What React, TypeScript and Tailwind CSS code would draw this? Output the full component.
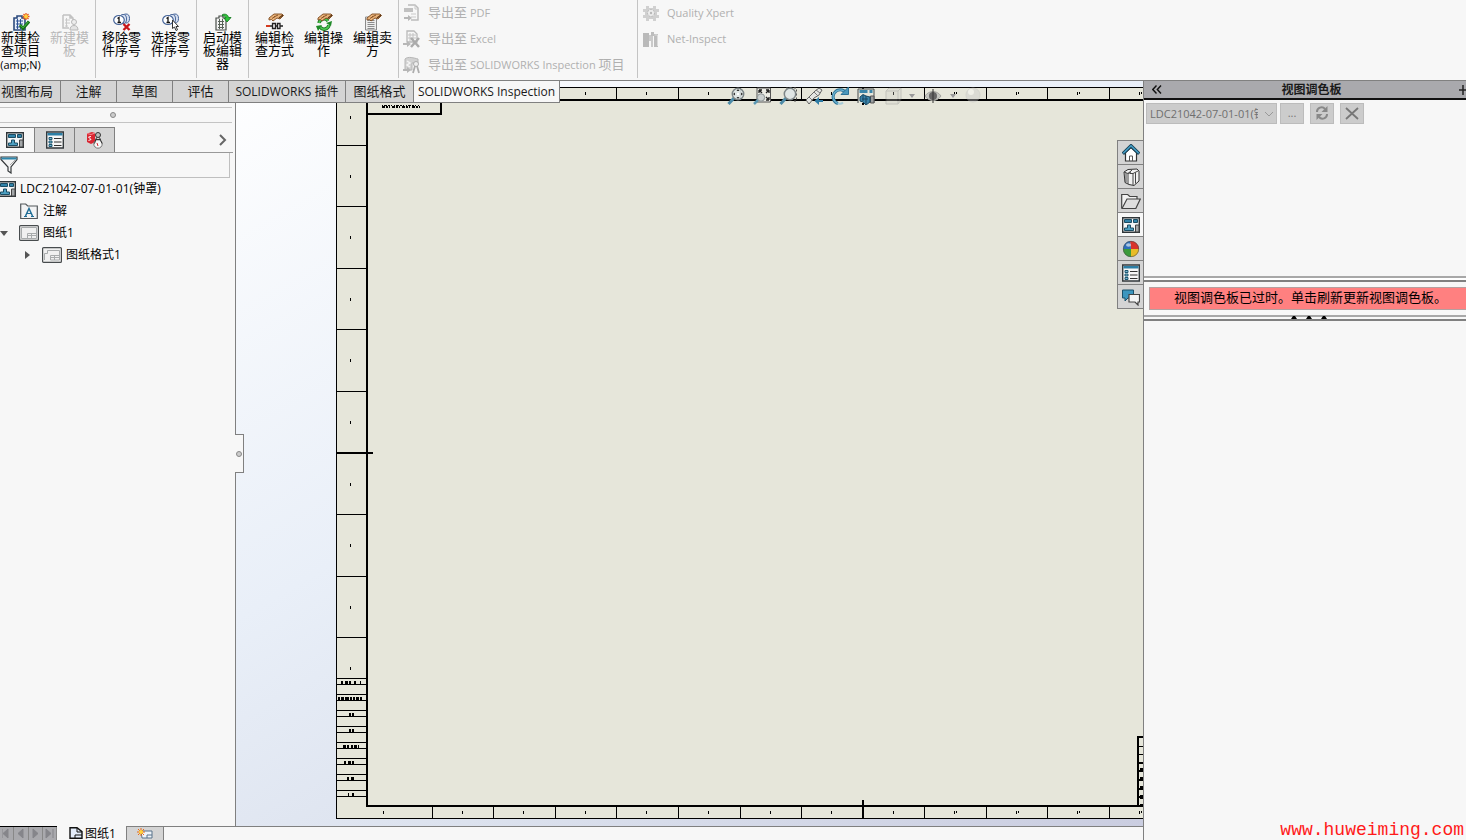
import React, { useState } from 'react';

type IconProps = { className?: string };

const Svg: React.FC<{ size?: number; className?: string; children: React.ReactNode }> = ({ size = 18, className = '', children }) => (
  <svg width={size} height={size} viewBox="0 0 18 18" fill="none" className={`shrink-0 ${className}`} aria-hidden="true">
    {children}
  </svg>
);

const Hand = () => (
  <>
    <path d="M3 5 8 1h8l1.500 1.500L14 6l-3-1-4 3-1.500-1.500L3 7z" fill="#e8b27a" />
    <path d="M3 5 8 1h8l1.500 1.500L14 6l-3-1-4 3-1.500-1.500L3 7zM8 4l4-2M6 5.500l3-2" stroke="#7d4a1e" strokeWidth=".9" />
    <path d="m13 5 4-3" stroke="#5f3816" strokeWidth="1.500" />
  </>
);

const Spark = () => (
  <>
    <path d="M14 0v7M10.500 3.500h7M11.500 1l5 5M16.500 1l-5 5" stroke="#e8591b" strokeWidth="1.300" />
    <circle cx="14" cy="3.500" r="1.900" fill="#ffd23c" />
  </>
);

const NewProjectIcon = () => (
  <Svg>
    <path d="M2 5h3V3h5v2h3v12H2z" fill="#e8eef8" stroke="#2d4b7d" strokeWidth="1.600" />
    <path d="M4 8h7M4 11h7M4 14h7M5.500 6v10M8.500 6v10" stroke="#2d5396" />
    <path d="m8 12 3 3.500 6-7" stroke="#147014" strokeWidth="3" />
    <path d="m8.500 12.300 2.500 2.500 5.500-6" stroke="#4cc34c" />
    <Spark />
  </Svg>
);

const NewTemplateIcon = () => (
  <Svg>
    <path d="M2 2h7l3 3v4M2 2v13h6M9 2v3h3" stroke="#c2c2c2" strokeWidth="1.500" />
    <path d="M4 7h5M4 10h5M4 13h3M5.500 5v9" stroke="#c8c8c8" />
    <circle cx="13" cy="9" r="2.500" fill="#eee" stroke="#b8b8b8" />
    <path d="M9 17c0-3 1.500-4.500 4-4.500s4 1.500 4 4.500z" fill="#e4e4e4" stroke="#b8b8b8" />
  </Svg>
);

const Balloons = () => (
  <>
    <ellipse cx="13" cy="5.500" rx="3.500" ry="4.500" fill="#d4def0" stroke="#446398" />
    <ellipse cx="10" cy="6" rx="3.500" ry="4.500" fill="#e4ebf7" stroke="#446398" />
    <ellipse cx="6" cy="7" rx="5.300" ry="4.500" fill="#fff" stroke="#446398" strokeWidth="1.200" />
    <path d="m4.500 5.500 1.500-1V10M4.500 9.500h3.500" stroke="#111" strokeWidth="1.300" />
  </>
);

const RemoveBalloonIcon = () => (
  <Svg>
    <Balloons />
    <path d="m10.500 11 6 6m0-6-6 6" stroke="#c8171b" strokeWidth="2.400" />
  </Svg>
);

const SelectBalloonIcon = () => (
  <Svg>
    <Balloons />
    <path d="M10.500 7v8.500l2-1.500 1.500 3.500 1.500-.700-1.500-3.300h2.500z" fill="#fff" stroke="#333" />
  </Svg>
);

const TemplateEditorIcon = () => (
  <Svg>
    <path d="M2 5h3V3h4v2h3v12H2z" fill="#f3f3f3" stroke="#4a4f4a" strokeWidth="1.200" />
    <path d="M4 8.500h6M4 11.500h6M4 14.500h6M5.500 6v10M8.500 6v10" stroke="#596259" />
    <path d="M8.500 1.500C12 .500 14 2 14.500 4.500H17L13 9 10 5h2c-.500-1.500-1.500-2.500-3.500-2z" fill="#2ec43a" stroke="#147a20" strokeWidth=".9" />
  </Svg>
);

const EditMethodIcon = () => (
  <Svg>
    <Hand />
    <path d="M1 13h16" stroke="#222" strokeWidth="1.500" />
    <path d="M0 12h4v2H0z" fill="#d33a20" />
    <path d="M6.500 10.500h3v5h-3zM11.500 10.500h2.500v5h-2.500z" fill="#eee" stroke="#222" strokeWidth="1.300" />
  </Svg>
);

const EditOperationIcon = () => (
  <Svg>
    <path d="M4 10a5 5 0 0 1 9-2M14 12a5 5 0 0 1-9 2" stroke="#1c7a22" strokeWidth="3.500" />
    <path d="M4 10a5 5 0 0 1 9-2M14 12a5 5 0 0 1-9 2" stroke="#4cc752" strokeWidth="1.500" />
    <path d="m11 10 6-2-1 5zM7 12l-6 1 2 5z" fill="#1f8a28" />
    <Hand />
  </Svg>
);

const EditVendorIcon = () => (
  <Svg>
    <path d="M1.500 4h11v13h-11z" fill="#eee" stroke="#8b8b8b" />
    <path d="M3.500 7.500h7M3.500 9.500h7M3.500 11.500h7M3.500 13.500h7M3.500 15.500h7" stroke="#8c8c8c" />
    <Hand />
  </Svg>
);

const ExportPdfIcon = () => (
  <Svg>
    <path d="M5 1h7l3 3v12H8" stroke="#bcbcbc" strokeWidth="1.500" />
    <path d="M1 4h9v4H1z" fill="#c1c1c1" />
    <path d="M8 10h5M8 13h5M12 1v4h3" stroke="#c9c9c9" />
    <path d="M1 13h4v-2l4 3-4 3v-2H1z" fill="#b7b7b7" />
  </Svg>
);

const ExportExcelIcon = () => (
  <Svg>
    <path d="M4 1h7l3 3v8H4z" stroke="#b9b9b9" strokeWidth="1.300" />
    <path d="M5 5h8M5 8h8M7 3v9M10 3v9" stroke="#c3c3c3" />
    <path d="m8 8 8 9m0-9-8 9" stroke="#ababab" strokeWidth="2.500" />
    <path d="M0 13h4v-2l4 3-4 3v-2H0z" fill="#b7b7b7" />
  </Svg>
);

const ExportProjectIcon = () => (
  <Svg>
    <path d="M2 3c3-3 9-1 13 0v4H9v7H2z" fill="#d2d2d2" stroke="#b6b6b6" />
    <path d="m4 5 3 2-3 2 3 2" stroke="#f4f4f4" strokeWidth="1.500" />
    <circle cx="13" cy="8" r="2.500" fill="#eee" stroke="#adadad" />
    <path d="m12 10-2 7m4-7 2 7" stroke="#adadad" strokeWidth="1.800" />
    <path d="M0 13h4v-2l4 3-4 3v-2H0z" fill="#b7b7b7" />
  </Svg>
);

const QualityIcon = () => (
  <Svg>
    <path d="M4 2h3v2h4V2h3v3h3v3h-2v3h2v3h-3v3h-3v-2H7v2H4v-3H1v-3h2V8H1V5h3z" fill="#d0d0d0" />
    <circle cx="9" cy="9" r="3.500" fill="#ececec" stroke="#b8b8b8" strokeDasharray="2 1" />
    <circle cx="9" cy="9" r="1.200" fill="#b8b8b8" />
  </Svg>
);

const NetInspectIcon = () => (
  <Svg>
    <path d="M1 3h6v14H1z" fill="#bababa" />
    <path d="M7 5h4v12H9v-6H7z" fill="#cacaca" />
    <path d="M9 2h3v4H9zM12 4h4v13h-4z" fill="#bdbdbd" />
    <path d="M12.500 5h3v11" stroke="#dcdcdc" />
  </Svg>
);

const DrawingIcon: React.FC<IconProps> = ({ className }) => (
  <Svg className={className}>
    <path d="M.700 1.700h16.600v14.600H.700z" fill="#f4f6f7" stroke="#2f3538" strokeWidth="1.400" />
    <path d="M2.500 3.500h7v3h-7zM11.500 3.500h4v3h-4z" fill="#2f83aa" stroke="#1c4c63" />
    <path d="M5.500 9h3v3h3v2.500h-9V12h3z" fill="#4da0c2" stroke="#1c4c63" />
    <path d="M13.500 9h3.500v7h-3.500z" fill="#a3a7a9" stroke="#444" />
  </Svg>
);

const PropertyIcon: React.FC<IconProps> = ({ className }) => (
  <Svg className={className}>
    <path d="M.700 1h16.600v16H.700z" fill="#f7f7f7" stroke="#33393c" strokeWidth="1.400" />
    <path d="M1.500 2h15v2.500h-15z" fill="#2d7fa6" />
    <path d="M3 6.500h3v2H3zM3 10h3v2H3zM3 13.500h3v2H3z" fill="#7dbbd4" stroke="#1d5670" />
    <path d="M8 7.500h7.500M8 11h7.500M8 14.500h7.500" stroke="#333" strokeWidth="1.200" />
  </Svg>
);

const BalloonManagerIcon = () => (
  <Svg>
    <path d="m1 2.500 5-1.500 3 1v9l-4 2-4-2z" fill="#d92531" />
    <path d="m1 2.500 4 1 4-1.500" stroke="#f18a90" />
    <path d="M5 5.500 2.500 6 5 8.500l-2.500 1" stroke="#fff" />
    <circle cx="12" cy="4" r="2.500" fill="#bbb" stroke="#333" />
    <circle cx="12" cy="13" r="4.200" fill="#f7f7f7" stroke="#777" />
    <path d="m10.500 6.500-2 6m5-6 2.500 6M9.500 8.500h5" stroke="#333" />
    <path d="m11 12 1 3" stroke="#d92531" />
  </Svg>
);

const FilterIcon = () => (
  <Svg>
    <path d="M1 1h16v2.500L11 11v6l-3-2v-4L1 3.500z" fill="#f3f3f3" stroke="#34383a" strokeWidth="1.200" />
    <path d="M1.500 1.500h15v2h-15z" fill="#2d87ad" />
    <path d="m10 9 5-5" stroke="#aaa" />
  </Svg>
);

const AnnotationIcon = () => (
  <Svg>
    <path d="M.700 16.500V2h5l2 2h9.600v12.500z" fill="#f2f3f4" stroke="#53585b" strokeWidth="1.200" />
    <path d="M5.500 14 9 6.500l3.500 7.500" stroke="#1f6d96" strokeWidth="1.500" />
    <path d="M7 11.500h4M4 14.500h3M11 14.500h3" stroke="#1f6d96" />
  </Svg>
);

const SheetIcon: React.FC<{ format?: boolean }> = ({ format }) => (
  <svg width="20" height="16" viewBox="0 0 20 16" fill="none" className="shrink-0" aria-hidden="true">
    <rect x=".6" y=".6" width="18.800" height="14.800" rx="1" fill="#f0f0f0" stroke="#484c4e" strokeWidth="1.200" />
    <path d={format ? 'M2.500 13V6.500h3v-3h12V13H8.500V8.500h9M12.500 8.500V13M8.500 10.500h9' : 'M2.500 2.500h15v11h-15zM8.500 13V8.500h9M12.500 8.500V13M8.500 10.500h9'} stroke="#a8abac" />
  </svg>
);

const HomeIcon = () => (
  <Svg>
    <path d="M3.500 8.500 9 3.500l5.500 5V17h-11z" fill="#fff" stroke="#333" strokeWidth="1.200" />
    <path d="M7.500 17v-5h3v5" stroke="#555" />
    <path d="m.800 9.800 8.200-8 8.200 8" stroke="#1a4358" strokeWidth="3.400" />
    <path d="m1.300 9.300 7.700-7.500 7.700 7.500" stroke="#45a0c9" strokeWidth="1.400" />
  </Svg>
);

const LibraryIcon = () => (
  <Svg>
    <path d="m2 4 4-2.500L15 1l2 2v10l-5 4.500-5-1-4-2z" fill="#f1f1f1" stroke="#333" />
    <path d="m2 4 4 1.500L9 4M6 5.500V16m0-10.500L10 2M11 5.500V17m0-11.500L16 3M7.500 5.500l3.500 0M13.500 4.500v11M4 5v9.500" stroke="#444" />
  </Svg>
);

const FolderIcon = () => (
  <svg width="20" height="18" viewBox="0 0 20 18" fill="none" className="shrink-0" aria-hidden="true">
    <path d="M.700 16V2.500h6l2 2H16V7" fill="#f1f1f1" stroke="#444" strokeWidth="1.200" />
    <path d="M1 16.500 6 7h13.300l-4.500 9.500z" fill="#dedede" stroke="#444" strokeWidth="1.200" />
  </svg>
);

const AppearanceIcon = () => (
  <Svg>
    <path d="M9 9 8 1a8 8 0 0 1 9 8z" fill="#d9322b" />
    <path d="M9 9h8a8 8 0 0 1-8 8z" fill="#e8bc26" />
    <path d="M9 9v8a8 8 0 0 1-8-8z" fill="#3b9a3b" />
    <path d="M9 9H1a8 8 0 0 1 7-8z" fill="#2e6eba" />
    <circle cx="9" cy="9" r="7.700" stroke="#4b4b4b" strokeOpacity=".6" />
    <ellipse cx="6.500" cy="5" rx="2.500" ry="1.800" fill="#fff" fillOpacity=".6" />
  </Svg>
);

const ForumIcon = () => (
  <Svg>
    <path d="M.500 2h11v8H6l-3 3v-3H.500z" fill="#3c96bf" stroke="#1b516b" />
    <path d="M7 6.500h10.500v7.500H16v3l-3-3H7z" fill="#f5f5f5" stroke="#444" strokeWidth="1.200" />
  </Svg>
);

const Lens: React.FC<{ children?: React.ReactNode }> = ({ children }) => (
  <>
    <path d="m7 11-5.500 6" stroke="#4d8ba8" strokeWidth="3" />
    <circle cx="11" cy="7" r="5.700" fill="#dfe5e6" fillOpacity=".9" stroke="#7d8587" strokeWidth="1.500" />
    {children}
  </>
);

const DownArrow = () => (
  <svg width="6" height="4" aria-hidden="true"><path d="M0 0h6L3 4z" fill="#999" /></svg>
);

const viewTools: { name: string; width: string; icon: React.ReactNode }[] = [
  {
    name: '整屏显示全图',
    width: 'w-[26px]',
    icon: <Svg><Lens><path d="m11 2-1.500 2h3zM11 12l-1.500-2h3zM6 7l2-1.500v3zM16 7l-2-1.500v3z" fill="#333" /><path d="M10 6h2v2h-2z" fill="#fff" /></Lens></Svg>
  },
  {
    name: '局部放大',
    width: 'w-[26px]',
    icon: (
      <Svg>
        <path d="M4 1h13.500v14H4z" fill="#ecece5" stroke="#555" />
        <path d="m6 3 3 3m7-3-3 3m3 7-3-3M6 3h3M6 3v3m10-3h-3m3 0v3m0 7h-3m3 0v-3" stroke="#222" strokeWidth="1.300" />
        <path d="m6 12-5 5" stroke="#5d99b4" strokeWidth="2.500" />
        <circle cx="8" cy="10.500" r="3.700" fill="#cbd0d0" stroke="#8c9496" />
      </Svg>
    )
  },
  {
    name: '放大选取范围',
    width: 'w-[26px]',
    icon: <Svg><path d="M7 1h10.500v13H13" stroke="#555" strokeDasharray="2 2" /><Lens /></Svg>
  },
  {
    name: '上一视图',
    width: 'w-[26px]',
    icon: (
      <Svg>
        <path d="m1 13 9-9 4-3 3 2-3 5-5 3-5 6z" fill="#e5e6e2" stroke="#666" />
        <path d="m9 5 4 4M4 10l3 3M11 3l4 3" stroke="#777" />
        <path d="M18 13h-4v-3l-4.500 4 4.500 4v-3h4z" fill="#2f7ca5" />
      </Svg>
    )
  },
  {
    name: '旋转视图',
    width: 'w-[26px]',
    icon: (
      <Svg>
        <path d="M15 6A7 7 0 1 0 7 16.500" stroke="#2d7296" strokeWidth="3" />
        <path d="M15 6A7 7 0 1 0 7 16.500" stroke="#6db3d1" strokeWidth="1.200" />
        <path d="M7 16.500c2 .500 4 0 5-1" stroke="#a5cbd8" strokeWidth="2" />
        <path d="M17.500 0v7.500H10z" fill="#4c98bb" stroke="#2d7296" />
      </Svg>
    )
  },
  {
    name: '三维工程图视图',
    width: 'w-[26px]',
    icon: (
      <Svg>
        <path d="M1 16V2h16v14" stroke="#464c4f" fill="#e6e6da" />
        <path d="M2.500 3h8v3h-8zM12.500 3h3v3h-3z" fill="#3b85a8" />
        <path d="M13.500 9h3.500v7h-3.500z" fill="#9a9d9e" stroke="#555" />
        <path d="m3 10 3-2.500 3 1.500 4 1v5l-4 3-3-3-3-1z" fill="#3a84aa" stroke="#184760" />
        <path d="M6 8v6M9 9v8M5 12h6" stroke="#184760" />
      </Svg>
    )
  },
  {
    name: '显示样式',
    width: 'w-[28px]',
    icon: <Svg className="opacity-30"><path d="m2 4 3-3h12v12l-3 4H2zM2 4h12v13M14 4l3-3" fill="#d0d0c8" stroke="#777" /></Svg>
  },
  { name: '显示样式选项', width: 'w-[10px]', icon: <DownArrow /> },
  {
    name: '隐藏或显示项目',
    width: 'w-[32px]',
    icon: (
      <Svg>
        <path d="M1 9c4-6 12-6 16 0-4 6-12 6-16 0z" fill="#c4c5c0" stroke="#a5a5a0" />
        <circle cx="9" cy="9" r="4" fill="#666" />
        <path d="M9 2v14" stroke="#333" />
      </Svg>
    )
  },
  { name: '隐藏或显示选项', width: 'w-[8px]', icon: <DownArrow /> },
  {
    name: '应用布景',
    width: 'w-[32px]',
    icon: <Svg className="opacity-40"><circle cx="9" cy="8" r="7" fill="#ccc" stroke="#bbb" /><circle cx="7" cy="5" r="3" fill="#fff" /></Svg>
  }
];

const ribbonGroups = [
  [
    { text: '新建检\n查项目', hint: '(amp;N)', icon: <NewProjectIcon /> },
    { text: '新建模\n板', icon: <NewTemplateIcon />, disabled: true }
  ],
  [
    { text: '移除零\n件序号', icon: <RemoveBalloonIcon /> },
    { text: '选择零\n件序号', icon: <SelectBalloonIcon /> }
  ],
  [{ text: '启动模\n板编辑\n器', icon: <TemplateEditorIcon /> }],
  [
    { text: '编辑检\n查方式', icon: <EditMethodIcon /> },
    { text: '编辑操\n作', icon: <EditOperationIcon /> },
    { text: '编辑卖\n方', icon: <EditVendorIcon /> }
  ]
] as { text: string; hint?: string; icon: React.ReactNode; disabled?: boolean }[][];

const exportItems = [
  { zh: '导出至', en: 'PDF', tail: '', icon: <ExportPdfIcon /> },
  { zh: '导出至', en: 'Excel', tail: '', icon: <ExportExcelIcon /> },
  { zh: '导出至', en: 'SOLIDWORKS Inspection', tail: '项目', icon: <ExportProjectIcon /> }
];

const commandTabs = [
  { label: '视图布局', width: 'w-[61px] pr-[6px]' },
  { label: '注解', width: 'w-[56px]' },
  { label: '草图', width: 'w-[56px]' },
  { label: '评估', width: 'w-[56px]' },
  { label: 'SOLIDWORKS 插件', width: 'w-[117px]' },
  { label: '图纸格式', width: 'w-[68px]' },
  { label: 'SOLIDWORKS Inspection', width: 'w-[146px]' }
];

const taskTabs = [
  { name: 'SOLIDWORKS 资源', icon: <HomeIcon /> },
  { name: '设计库', icon: <LibraryIcon /> },
  { name: '文件探索器', icon: <FolderIcon /> },
  { name: '视图调色板', icon: <DrawingIcon /> },
  { name: '外观', icon: <AppearanceIcon /> },
  { name: '自定义属性', icon: <PropertyIcon /> },
  { name: 'SOLIDWORKS 论坛', icon: <ForumIcon /> }
];

const columns = [432, 493, 555, 616, 678, 740, 801, 863, 924, 986, 1047, 1109];
const rows = [65, 126, 188, 249, 311, 373, 434, 496, 557];
const revisionRows = [598, 614, 630, 646, 662, 678, 694, 710];
const revisionMarks = ['2 2 3 1 2 3 2 4', '2 1 3 1 4 1 2 1', '2 1 2 30', '2 1 2 30', '3 1 2 2 2 1', '2 2 3 1 2 30', '2 2 3 30', '1 3 2 30'];
const revisionStarts = [341, 338, 349, 349, 343, 344, 347, 348];
const revisionEnds = [361, 362, 354, 354, 359, 357, 354, 354];

const SheetDrawing = () => (
  <svg className="absolute inset-0 h-full w-full" shapeRendering="crispEdges" aria-hidden="true">
    <rect x="336" y="7" width="1000" height="731" fill="#e6e6da" />
    <g fill="none" stroke="#000" strokeWidth="1">
      <path d="M1336 7.500H336.500v731H1336" />
      {columns.map(x => (
        <path key={x} d={`M${x}.5 7v13M${x}.5 726v13`} />
      ))}
      {rows.map(y => (
        <path key={y} d={`M336 ${y}.5h31`} />
      ))}
      {revisionRows.map(y => (
        <path key={y} d={`M336 ${y}.5h31M336 ${y + 6}.5h31`} />
      ))}
      <path d="M1138 666.500h198M1138 674.500h198" />
    </g>
    <g fill="none" stroke="#000" strokeWidth="2">
      <path d="M1336 20H367v706h969" />
      <path d="M367 34h74V20" />
      <path d="M336 373h37M863 7v18M863 720v19" />
      <path d="M1336 657h-198v69M1138 683h198M1138 691h198M1138 700h198M1138 709h198M1138 717h198" />
    </g>
    <g stroke="#000">
      {[409, ...columns.slice(0, -1).map(x => x + 30), 1139].map((x, i) => (
        <path key={x} d={`M${i === 0 ? 383 : x}.5 731v3${i > 0 ? `M${x}.5 12v3` : ''}${x > 930 ? `M${x + 2}.5 12v2M${x + 2}.5 731v2` : ''}`} />
      ))}
      {[36, ...rows.map(y => y + 30)].map(y => (
        <path key={y} d={`M350.5 ${y}v3`} />
      ))}
      <path d="M382 25.500h38" strokeDasharray="1 1 3 1 2 1 1 2" strokeWidth="1" />
      <path d="M382 27h38" strokeDasharray="3 1 2 1 1 2" strokeWidth="2" />
      {revisionRows.map((y, i) => (
        <path key={y} d={`M${revisionStarts[i]} ${y + 4}H${revisionEnds[i]}`} strokeDasharray={revisionMarks[i]} strokeWidth="3" />
      ))}
      <path d="M1141 688v38" strokeDasharray="4 5" strokeWidth="3" />
    </g>
  </svg>
);

const FeaturePanel = () => {
  const [panel, setPanel] = useState(0);
  return (
    <aside className="relative z-10 flex w-[236px] flex-1 flex-col border-r border-[#808080] bg-[#f7f7f7]">
      <div className="mr-[3px] mt-1 flex h-4 items-center justify-center border-y border-[#c4c4c4]">
        <span className="mr-[6px] h-[6px] w-[6px] rounded-full border border-[#888] bg-[#ccc]"></span>
      </div>
      <div className="mr-[2px] mt-1 flex h-[26px] border-b border-[#999]">
        {[
          { name: '工程图', width: 'w-[34px] pr-1', icon: <DrawingIcon /> },
          { name: '属性', width: 'w-[41px] border-x', icon: <PropertyIcon /> },
          { name: '检查', width: 'w-[40px] border-r', icon: <BalloonManagerIcon /> }
        ].map((item, i) => (
          <button
            key={item.name}
            aria-label={item.name}
            onClick={() => setPanel(i)}
            className={`flex items-center justify-center border-t border-[#808080] ${item.width} ${panel === i ? 'bg-[#f7f7f7]' : 'bg-[#d4d4d4]'}`}
          >
            {item.icon}
          </button>
        ))}
        <button aria-label="展开" className="ml-auto flex w-5 items-center justify-center">
          <svg width="8" height="12" viewBox="0 0 8 12" fill="none"><path d="m1 1 5 5-5 5" stroke="#666" strokeWidth="2" /></svg>
        </button>
      </div>
      <label className="mr-[5px] flex h-[25px] items-center border-b border-r border-[#bfbfbf]">
        <FilterIcon />
        <input aria-label="过滤器" className="w-full min-w-0 bg-transparent px-1 text-[12px] outline-none" />
      </label>
      <ul className="text-[12px] leading-[22px] text-black">
        <li className="flex h-[22px] items-center gap-1">
          <DrawingIcon className="-ml-[2px]" />
          <span>LDC21042-07-01-01(钟罩)</span>
        </li>
        <li className="flex h-[22px] items-center gap-[5px] pl-5">
          <AnnotationIcon />
          <span>注解</span>
        </li>
        <li className="flex h-[22px] items-center">
          <svg width="8" height="5" className="mr-[11px]"><path d="M0 0h8L4 5z" fill="#555" /></svg>
          <SheetIcon />
          <span className="pl-1">图纸1</span>
        </li>
        <li className="flex h-[22px] items-center pl-[25px]">
          <svg width="5" height="8" className="mr-3"><path d="M0 0v8l5-4z" fill="#555" /></svg>
          <SheetIcon format />
          <span className="pl-1">图纸格式1</span>
        </li>
      </ul>
      <button aria-label="折叠面板" className="absolute left-[235px] top-[331px] flex h-[39px] w-[9px] items-center justify-center border border-l-0 border-[#808080] bg-[#f7f7f7]">
        <span className="h-[6px] w-[6px] shrink-0 rounded-full border border-[#888] bg-[#ccc]"></span>
      </button>
    </aside>
  );
};

const ViewPalette = () => (
  <aside className="relative flex w-[323px] shrink-0 flex-col border-l border-[#808080] bg-[#f7f7f7]">
    <div className="flex h-5 items-center border-b-2 border-t border-b-[#111] border-t-[#808080] bg-[#a9a9ad] pl-2">
      <button aria-label="折叠" className="flex w-3 items-center">
        <svg width="10" height="9" viewBox="0 0 10 9" fill="none"><path d="M4.500.500.800 4.500l3.700 4M9 .500 5.300 4.500l3.700 4" stroke="#111" strokeWidth="1.400" /></svg>
      </button>
      <h2 className="flex-1 text-center text-[12px] font-bold leading-4">视图调色板</h2>
      <button aria-label="固定" className="flex">
        <svg width="7" height="10" viewBox="0 0 7 10"><path d="M0 5h4M4 0v10M4 5h3" stroke="#222" strokeWidth="1.500" /></svg>
      </button>
    </div>
    <div className="flex h-[26px] items-center gap-[6px] pl-[2px]">
      <div className="relative -mr-[3px] flex h-[21px] w-[131px]">
        <select aria-label="工程图文件" disabled className="h-full w-full appearance-none overflow-hidden border border-[#bcbcbc] bg-[#cccccc] pl-[3px] pr-[18px] text-[11px] leading-[19px] text-[#6f6f6f] opacity-100">
          <option>LDC21042-07-01-01(钟罩)</option>
        </select>
        <svg className="pointer-events-none absolute right-1 top-2" width="8" height="6" fill="none"><path d="m0 1 4 4 4-4" stroke="#999" /></svg>
      </div>
      <button disabled className="h-[21px] w-[24px] border border-[#bcbcbc] bg-[#cccccc] text-[11px] leading-4 text-[#777]">...</button>
      <button disabled aria-label="刷新" className="flex h-[21px] w-[24px] items-center justify-center border border-[#bcbcbc] bg-[#cccccc]">
        <svg width="14" height="14" viewBox="0 0 14 14" fill="none">
          <path d="M2 6a4.500 4.500 0 0 1 8-3M12 8a4.500 4.500 0 0 1-8 3" stroke="#888" strokeWidth="2" />
          <path d="M12.500 0v6h-6zM1.500 14V8h6z" fill="#888" />
        </svg>
      </button>
      <button disabled aria-label="清除" className="flex h-[21px] w-[24px] items-center justify-center border border-[#bcbcbc] bg-[#cccccc]">
        <svg width="14" height="13" viewBox="0 0 14 13" fill="none"><path d="m1 1 12 11M13 1 1 12" stroke="#777" strokeWidth="1.800" /></svg>
      </button>
    </div>
    <div className="mt-[150px] h-[6px] border-y-2 border-b-[#808080] border-t-[#a8a8a8] bg-white"></div>
    <p className="ml-[5px] mt-[5px] h-[23px] border border-r-0 border-[#b5a0a0] bg-[#ff8080] pl-6 text-[13px] leading-[19px] text-black">
      视图调色板已过时。单击刷新更新视图调色板。
    </p>
    <div className="mt-[5px] flex h-[6px] items-end justify-center gap-[9px] border-y-2 border-b-[#808080] border-t-[#a8a8a8] pl-2">
      {[0, 1, 2].map(i => (
        <svg key={i} width="6" height="3" className="shrink-0"><path d="M0 3h6L4 0H2z" fill="#000" /></svg>
      ))}
    </div>
    <a href="http://www.huweiming.com" className="ml-auto mt-auto pr-[2px] font-['Liberation_Mono',monospace] text-[18px] leading-5 text-[#ff1a1a]">www.huweiming.com</a>
  </aside>
);

const App: React.FC = () => {
  const [tab, setTab] = useState(6);
  const [task, setTask] = useState(3);

  return (
    <div className="flex h-screen flex-col overflow-hidden bg-[#f7f7f7] font-['Open_Sans','Noto_Sans_CJK_SC',sans-serif] text-[#1a1a1a]">
      <header className="flex h-20 shrink-0 overflow-hidden pb-[2px]">
        <div className="-ml-[5px] flex">
          {ribbonGroups.map((group, i) => (
            <div key={i} className="flex border-r border-[#c4c4c4] px-px">
              {group.map(item => (
                <button
                  key={item.text}
                  disabled={item.disabled}
                  className={`flex w-[49px] flex-col items-center pt-[13px] text-[13px] leading-[13px] ${item.disabled ? 'text-[#b8b8b8]' : 'text-black'}`}
                >
                  {item.icon}
                  <span className="whitespace-pre text-center">{item.text}</span>
                  {item.hint && <span className="pt-px text-[11px]">{item.hint}</span>}
                </button>
              ))}
            </div>
          ))}
        </div>
        <div className="flex w-[239px] flex-col border-r border-[#c4c4c4] pl-1 text-[#b0b0b0]">
          {exportItems.map(item => (
            <button key={item.en} disabled className="flex h-[26px] items-center gap-[7px] whitespace-nowrap text-[11px]">
              {item.icon}
              <span><span className="text-[13px]">{item.zh}</span> {item.en} <span className="text-[13px]">{item.tail}</span></span>
            </button>
          ))}
        </div>
        <div className="flex flex-col pl-1 text-[11px] text-[#b0b0b0]">
          <button disabled className="flex h-[26px] items-center gap-[7px]"><QualityIcon />Quality Xpert</button>
          <button disabled className="flex h-[26px] items-center gap-[7px]"><NetInspectIcon />Net-Inspect</button>
        </div>
      </header>

      <div className="flex min-h-0 flex-1">
        <div className="flex min-w-0 flex-1 flex-col">
          <main className="relative flex min-h-0 flex-1 flex-col items-start overflow-hidden border-t border-[#808080] bg-[linear-gradient(150deg,#ffffff_8%,#e9eff8_48%,#dce2ee_72%,#cacde0_100%)]">
            <div className="absolute inset-0 -top-px">
              <SheetDrawing />
            </div>
            <nav className="relative z-10 -mt-px flex h-[23px] border-b border-t border-[#808080]">
              {commandTabs.map((item, i) => (
                <button
                  key={item.label}
                  onClick={() => setTab(i)}
                  className={`flex items-center justify-center whitespace-nowrap border-r border-[#808080] ${item.label.startsWith('S') ? 'text-[12px]' : 'text-[13px]'} ${item.width} ${tab === i ? 'bg-[#f7f7f7]' : 'bg-[#d4d4d4]'}`}
                >
                  {item.label}
                </button>
              ))}
            </nav>
            <FeaturePanel />
            <div className="absolute right-[154px] top-[6px] z-10 flex h-[18px]">
              {viewTools.map(tool => (
                <button key={tool.name} aria-label={tool.name} className={`flex items-center justify-center ${tool.width}`}>
                  {tool.icon}
                </button>
              ))}
            </div>
            <div className="absolute -right-px top-[59px] z-10 flex w-[27px] flex-col border border-b-0 border-[#808080]">
              {taskTabs.map((item, i) => (
                <button
                  key={item.name}
                  aria-label={item.name}
                  onClick={() => setTask(i)}
                  className={`flex h-6 items-center justify-center border-b border-[#808080] ${task === i ? 'bg-[#f7f7f7]' : 'bg-[#d4d4d4]'}`}
                >
                  {item.icon}
                </button>
              ))}
            </div>
          </main>

          <footer className="flex h-[14px] shrink-0 overflow-hidden">
            <div className="flex w-[57px] justify-end border-t border-black bg-[#a9a9ad]">
              {['M6 1v9L1 5.500zM0 1v9', 'M7 1v9L2 5.500z', 'M2 1v9l5-4.500z', 'M1 1v9l5-4.500zM8 1v9'].map((d, i) => (
                <button key={d} aria-label={['第一张', '上一张', '下一张', '最后一张'][i]} className="flex w-4 items-center justify-center border-r border-[#888]">
                  <svg width="9" height="11"><path d={d} fill="#85858a" stroke="#85858a" /></svg>
                </button>
              ))}
            </div>
            <button className="flex h-[14px] w-[69px] items-center justify-center gap-[2px] pl-[2px] text-[12px] leading-[13px] text-black">
              <svg width="14" height="12" viewBox="0 0 14 12" fill="none">
                <path d="M1 .700h7l5 4v6.600H1z" fill="#e3ecf9" stroke="#111" strokeWidth="1.400" />
                <path d="M8 1v4h5M6 8h7M6 8v3" stroke="#111" />
              </svg>
              图纸1
            </button>
            <button aria-label="添加图纸" className="flex h-[14px] w-[38px] items-center justify-center border-x border-t border-[#808080] bg-[#d4d4d4]">
              <svg width="16" height="12" viewBox="0 0 16 12" fill="none">
                <path d="M4 3h11v7H5z" fill="#eef3f8" stroke="#58738b" />
                <path d="M10 10V7h5" stroke="#58738b" />
                <path d="M4 0v8M0 4h8M1 1l6 6M7 1 1 7" stroke="#e86a1b" />
                <circle cx="4" cy="4" r="2" fill="#ffd33c" />
              </svg>
            </button>
            <div className="flex-1 border-t border-[#808080]"></div>
          </footer>
        </div>
        <ViewPalette />
      </div>
    </div>
  );
};

export default App;
